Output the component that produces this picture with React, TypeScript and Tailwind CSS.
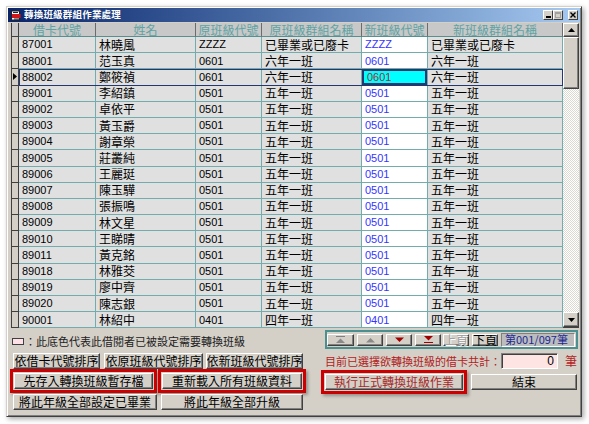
import React from 'react';

type Row = [string, string, string, string, string, string];

const ROWS: Row[] = [
  ['87001', '林曉風', 'ZZZZ', '已畢業或已廢卡', 'ZZZZ', '已畢業或已廢卡'],
  ['88001', '范玉真', '0601', '六年一班', '0601', '六年一班'],
  ['88002', '鄭筱禎', '0601', '六年一班', '0601', '六年一班'],
  ['89001', '李紹鎮', '0501', '五年一班', '0501', '五年一班'],
  ['89002', '卓依平', '0501', '五年一班', '0501', '五年一班'],
  ['89003', '黃玉爵', '0501', '五年一班', '0501', '五年一班'],
  ['89004', '謝章榮', '0501', '五年一班', '0501', '五年一班'],
  ['89005', '莊叢純', '0501', '五年一班', '0501', '五年一班'],
  ['89006', '王麗珽', '0501', '五年一班', '0501', '五年一班'],
  ['89007', '陳玉驊', '0501', '五年一班', '0501', '五年一班'],
  ['89008', '張振鳴', '0501', '五年一班', '0501', '五年一班'],
  ['89009', '林文星', '0501', '五年一班', '0501', '五年一班'],
  ['89010', '王睇晴', '0501', '五年一班', '0501', '五年一班'],
  ['89011', '黃克銘', '0501', '五年一班', '0501', '五年一班'],
  ['89018', '林雅茭', '0501', '五年一班', '0501', '五年一班'],
  ['89019', '廖中齊', '0501', '五年一班', '0501', '五年一班'],
  ['89020', '陳志銀', '0501', '五年一班', '0501', '五年一班'],
  ['90001', '林紹中', '0401', '四年一班', '0401', '四年一班'],
];

const SELECTED = 2;

// classic raised button
const BTN =
  'flex items-center justify-center bg-[#d4d0c8] border border-t-white border-l-white border-r-[#404040] border-b-[#404040] shadow-[inset_-1px_-1px_0_#808080] text-[12px] leading-none text-black whitespace-nowrap overflow-hidden';

// red annotation frame around a button
const FRAMED =
  'flex items-center justify-center bg-[#d4d0c8] border border-t-white border-l-white border-r-[#404040] border-b-[#404040] shadow-[inset_-1px_-1px_0_#808080,0_0_0_1px_#d4d0c8,0_0_0_4px_#cc0000,2px_2px_3px_4px_rgba(0,0,0,0.3)] text-[12px] leading-none whitespace-nowrap';

const CELL = 'flex items-center border-r border-b border-[#72acac] pl-[3px] whitespace-nowrap';
const NUM = "font-['Liberation_Sans',sans-serif] text-[11px]";
const HAN = 'text-[12px] leading-none';

function TitleIcon() {
  return (
    <svg width="10" height="11" viewBox="0 0 10 11">
      <rect x="0.5" y="1" width="8" height="9" fill="#fff" stroke="#222" strokeWidth="1" />
      <rect x="1" y="4" width="8.5" height="4" fill="#d01818" />
      <rect x="2" y="2" width="5" height="1" fill="#222" />
      <rect x="3" y="8.5" width="5" height="1" fill="#222" />
    </svg>
  );
}

function TitleBar() {
  return (
    <div className="h-[14px] flex items-center bg-gradient-to-r from-[#0a246a] to-[#a6caf0]">
      <div className="ml-[3px] flex items-center">
        <TitleIcon />
      </div>
      <span className="ml-[3px] text-white font-bold text-[9.5px] leading-none tracking-[0.2px]">
        轉換班級群組作業處理
      </span>
      <div className="ml-auto flex items-center mr-[2px]">
        <div className="w-[10px] h-[10px] bg-[#d4d0c8] border border-t-white border-l-white border-r-[#404040] border-b-[#404040] flex items-end justify-center pb-[1px]">
          <div className="w-[5px] h-[2px] bg-black" />
        </div>
        <div className="w-[10px] h-[10px] bg-[#d4d0c8] border border-t-white border-l-white border-r-[#404040] border-b-[#404040] flex items-center justify-center">
          <div className="w-[6px] h-[6px] border border-t-2 border-[#a0a0a0]" />
        </div>
        <div className="ml-[5px] w-[10px] h-[10px] bg-[#d4d0c8] border border-t-white border-l-white border-r-[#404040] border-b-[#404040] flex items-center justify-center">
          <svg width="6" height="6" viewBox="0 0 6 6">
            <path d="M0.5 0.5 L5.5 5.5 M5.5 0.5 L0.5 5.5" stroke="#000" strokeWidth="1.4" />
          </svg>
        </div>
      </div>
    </div>
  );
}

function HeaderRow() {
  const heads: [string, string][] = [
    ['借卡代號', 'w-[77px]'],
    ['姓名', 'w-[100px]'],
    ['原班級代號', 'w-[66px]'],
    ['原班級群組名稱', 'w-[100px]'],
    ['新班級代號', 'w-[66px]'],
    ['新班級群組名稱', 'w-[135px]'],
  ];
  return (
    <div className="flex h-[14px]">
      <div className="w-[8px] bg-[#c8c8c8] border-l border-r border-b border-[#404040]" />
      {heads.map(([t, w]) => (
        <div
          key={t}
          className={`${w} flex items-center justify-center bg-[#c8c8c8] border-r border-r-[#6c6c6c] border-b border-b-[#5a8f8f] text-[12px] leading-[12px] text-[#5ea3a3] whitespace-nowrap`}
        >
          {t}
        </div>
      ))}
    </div>
  );
}

function DataRow({ row, selected }: { row: Row; selected: boolean }) {
  return (
    <div className="flex h-[16.2px]">
      <div className="w-[8px] bg-[#d4d0c8] border-l border-r border-b border-[#404040] flex items-center">
        {selected && (
          <svg width="5" height="7" viewBox="0 0 5 7" className="ml-[1px]">
            <path d="M0 0 L4 3.5 L0 7 Z" fill="#000" />
          </svg>
        )}
      </div>
      <div
        className={
          selected
            ? 'flex bg-[#e0e0e0] text-black outline outline-1 -outline-offset-1 outline-[#24386f]'
            : 'flex bg-[#e0e0e0] text-black'
        }
      >
        <div className={`${CELL} w-[77px] ${NUM}`}>{row[0]}</div>
        <div className={`${CELL} w-[100px] ${HAN}`}>{row[1]}</div>
        <div className={`${CELL} w-[66px] ${NUM}`}>{row[2]}</div>
        <div className={`${CELL} w-[100px] ${HAN}`}>{row[3]}</div>
        {selected ? (
          <div className={`${CELL} w-[66px] ${NUM} pl-[5px] bg-[#00ffff] text-[#a33030] shadow-[inset_0_0_0_2px_#24386f]`}>
            {row[4]}
          </div>
        ) : (
          <div className={`${CELL} w-[66px] ${NUM} bg-white text-[#3535ff]`}>{row[4]}</div>
        )}
        <div className={`${CELL} w-[135px] ${HAN}`}>{row[5]}</div>
      </div>
    </div>
  );
}

function ScrollBar() {
  const arrowBtn =
    'w-[16px] bg-[#d4d0c8] border border-t-white border-l-white border-r-[#404040] border-b-[#404040] shadow-[inset_-1px_-1px_0_#808080] flex items-center justify-center';
  return (
    <div className="w-[16px] flex flex-col border-b border-[#404040]">
      <div className={`${arrowBtn} h-[14px]`}>
        <svg width="7" height="4" viewBox="0 0 7 4">
          <path d="M0 4 L3.5 0 L7 4 Z" fill="#000" />
        </svg>
      </div>
      <div className="w-[16px] h-[52px] bg-[#d4d0c8] border border-t-white border-l-white border-r-[#404040] border-b-[#404040] shadow-[inset_-1px_-1px_0_#808080]" />
      <div className="flex-1 bg-[repeating-conic-gradient(#ffffff_0_25%,#dcd9d2_0_50%)] bg-[length:2px_2px]" />
      <div className={`${arrowBtn} h-[15px]`}>
        <svg width="7" height="4" viewBox="0 0 7 4">
          <path d="M0 0 L3.5 4 L7 0 Z" fill="#000" />
        </svg>
      </div>
    </div>
  );
}

function Grid() {
  return (
    <div className="mt-[1px] ml-[3px] w-[568px] flex">
      <div className="w-[552px] flex flex-col">
        <HeaderRow />
        {ROWS.map((r, i) => (
          <DataRow key={r[0]} row={r} selected={i === SELECTED} />
        ))}
      </div>
      <ScrollBar />
    </div>
  );
}

function NavBar() {
  const nb =
    'h-[12px] bg-[#d4d0c8] border border-t-white border-l-white border-r-[#404040] border-b-[#404040] shadow-[inset_-1px_-1px_0_#808080] flex items-center justify-center';
  return (
    <div className="mt-[2px] h-[19px] w-[253px] border-2 border-[#4b9090] bg-[#d4d0c8] flex items-center">
      <div className={`${nb} w-[27px]`}>
        <svg width="11" height="7" viewBox="0 0 11 7">
          <rect x="1" y="0" width="9" height="1" fill="#808080" />
          <path d="M1 7 L5.5 2.5 L10 7 Z" fill="#8a8a8a" />
        </svg>
      </div>
      <div className={`${nb} w-[26px] ml-[3px]`}>
        <svg width="11" height="6" viewBox="0 0 11 6">
          <path d="M1 5.5 L5.5 1 L10 5.5 Z" fill="#8a8a8a" />
        </svg>
      </div>
      <div className={`${nb} w-[26px] ml-[3px]`}>
        <svg width="11" height="6" viewBox="0 0 11 6">
          <path d="M1 0.5 L10 0.5 L5.5 5 Z" fill="#a00000" />
        </svg>
      </div>
      <div className={`${nb} w-[26px] ml-[3px]`}>
        <svg width="11" height="7" viewBox="0 0 11 7">
          <path d="M1 0 L10 0 L5.5 4.5 Z" fill="#a00000" />
          <rect x="1" y="6" width="9" height="1" fill="#a00000" />
        </svg>
      </div>
      <div className={`${nb} w-[26px] ml-[2px] text-[12px] leading-none text-[#a0a0a0] [text-shadow:1px_1px_0_#fff]`}>上頁</div>
      <div className={`${nb} w-[26px] ml-[3px] text-[12px] leading-none text-black`}>下頁</div>
      <div className="ml-[3px] w-[74px] h-[14px] bg-[#bcbcbc] border border-t-[#808080] border-l-[#808080] border-b-white border-r-white flex items-center pl-[3px] text-[11px] leading-none text-[#1c2a94] whitespace-nowrap">
        第001/097筆
      </div>
    </div>
  );
}

export default function App() {
  return (
    <div className="w-[589px] h-[424px] bg-white overflow-hidden pt-[6px] pl-[6px] font-['Noto_Sans_CJK_TC','Liberation_Sans',sans-serif]">
      <div className="w-[576px] h-[411px] bg-[#d4d0c8] border border-t-[#d4d0c8] border-l-[#d4d0c8] border-r-[#404040] border-b-[#404040] p-[1px] shadow-[inset_1px_1px_0_#fff,inset_-1px_-1px_0_#808080,2px_2px_5px_rgba(0,0,0,0.35)] flex flex-col">
        <TitleBar />
        <Grid />

        <div className="flex pl-[3px]">
          {/* left side: legend + action buttons */}
          <div className="w-[296px] flex flex-col">
            <div className="mt-[5px] h-[16px] flex items-center pl-[1px]">
              <div className="w-[12px] h-[7px] bg-[#ffe0e6] border border-[#404040]" />
              <span className="ml-[1px] text-[11px] leading-none text-[#222] whitespace-nowrap">
                ：此底色代表此借閱者已被設定需要轉換班級
              </span>
            </div>
            <div className="mt-[4px] flex h-[16px] pl-[2px]">
              <div className={`${BTN} w-[87px]`}>依借卡代號排序</div>
              <div className={`${BTN} w-[99px] ml-[4px] text-[11.5px]`}>依原班級代號排序</div>
              <div className={`${BTN} w-[97px] ml-[3px] text-[11.5px]`}>依新班級代號排序</div>
            </div>
            <div className="mt-[4px] flex h-[16px] pl-[3px]">
              <div className={`${FRAMED} w-[139px] text-black`}>先存入轉換班級暫存檔</div>
              <div className={`${FRAMED} w-[140px] ml-[9px] text-black`}>重新載入所有班級資料</div>
            </div>
            <div className="mt-[5px] flex h-[16px] pl-[2px]">
              <div className={`${BTN} w-[144px]`}>將此年級全部設定已畢業</div>
              <div className={`${BTN} w-[142px] ml-[4px]`}>將此年級全部升級</div>
            </div>
          </div>

          {/* right side: navigator, counter, run */}
          <div className="ml-[18px] w-[253px] flex flex-col">
            <NavBar />
            <div className="mt-[4px] h-[16px] flex items-center">
              <span className="text-[11px] leading-none text-[#b22222] whitespace-nowrap">
                目前已選擇欲轉換班級的借卡共計：
              </span>
              <div className="ml-auto w-[58px] h-[16px] bg-[#ffe4e4] border border-t-[#808080] border-l-[#808080] border-b-white border-r-white shadow-[inset_1px_1px_0_#404040] flex items-center justify-end pr-[3px] font-['Liberation_Sans',sans-serif] text-[12px] leading-none text-black">
                0
              </div>
              <span className="ml-[7px] mr-[1px] text-[12px] leading-none text-[#b22222]">筆</span>
            </div>
            <div className="mt-[5px] h-[16px] flex">
              <div className={`${FRAMED} w-[138px] text-[#a52a2a]`}>執行正式轉換班級作業</div>
              <div className={`${BTN} w-[106px] ml-[8px]`}>結束</div>
            </div>
          </div>
        </div>
      </div>
    </div>
  );
}
